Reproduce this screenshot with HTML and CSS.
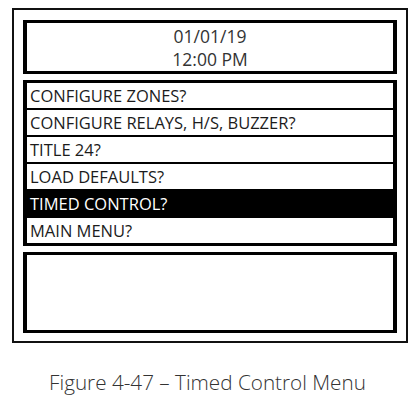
FILE: index.html
```html
<!DOCTYPE html>
<html lang="en">
<head>
  <meta charset="UTF-8">
  <title>Timed Control Menu</title>
  <link rel="stylesheet" href="styles.css">
</head>
<body>
  <div class="figure">
    <div class="panel">
      <div class="screen clock">
        <div>01/01/19</div>
        <div>12:00 PM</div>
      </div>

      <ul class="screen menu">
        <li>CONFIGURE ZONES?</li>
        <li>CONFIGURE RELAYS, H/S, BUZZER?</li>
        <li>TITLE 24?</li>
        <li>LOAD DEFAULTS?</li>
        <li class="selected">TIMED CONTROL?</li>
        <li>MAIN MENU?</li>
      </ul>

      <div class="screen message"></div>
    </div>

    <p class="caption">Figure 4-47 – Timed Control Menu</p>
  </div>
</body>
</html>
```

FILE: styles.css
```css
body {
  margin: 0;
  background: #fff;
  font-family: "Open Sans", "Noto Sans", sans-serif;
  color: #1c1c1c;
}
.figure {
  width: 417px;
  padding-top: 8px;
}
.panel {
  box-sizing: border-box;
  width: 396px;
  height: 335px;
  margin-left: 12px;
  border: 2px solid #111;
  padding: 10px 9px 8px 9px;
  display: flex;
  flex-direction: column;
  gap: 6px;
}
.screen {
  border-style: solid;
  border-color: #000;
  border-width: 3px 4px;
  margin: 0;
  padding: 0;
}
.clock {
  height: 54px;
  box-sizing: border-box;
  display: flex;
  flex-direction: column;
  align-items: center;
  justify-content: center;
  padding-top: 1px;
  font-size: 17.5px;
  line-height: 23px;
  color: #333;
}
.menu {
  list-style: none;
  height: 166px;
  box-sizing: border-box;
  display: flex;
  flex-direction: column;
  gap: 2px;
  background: #000;
}
.menu li {
  height: 25px;
  line-height: 25px;
  padding-left: 3px;
  background: #fff;
  font-size: 16.5px;
  white-space: nowrap;
}
.menu li.selected {
  background: #000;
  color: #fff;
}
.message {
  flex: 1;
}
.caption {
  margin: 25px 0 0 0;
  text-align: center;
  font-size: 20.7px;
  font-weight: 300;
  color: #333;
  padding-right: 2px;
}
```
